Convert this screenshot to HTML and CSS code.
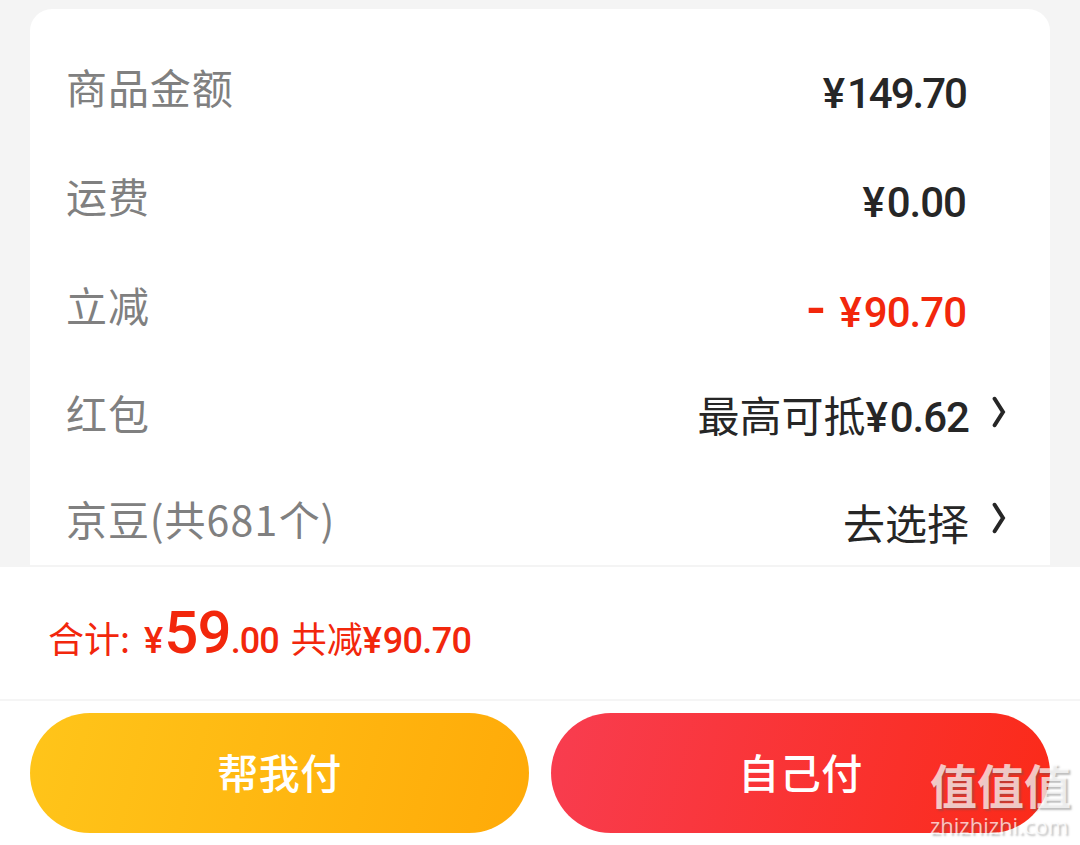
FILE: index.html
```
<!DOCTYPE html>
<html lang="zh-CN">
<head>
    <meta charset="UTF-8">
    <meta name="viewport" content="width=device-width, initial-scale=1.0">
    <title>确认订单</title>
    <link rel="stylesheet" href="styles.css">
</head>
<body>

    <div class="page">
        <!-- Price details -->
        <div class="details">
            <div class="card">
                <div class="row">
                    <span class="label">商品金额</span>
                    <span class="value price tight"><span class="yen">¥</span>149.70</span>
                </div>
                <div class="row">
                    <span class="label">运费</span>
                    <span class="value price"><span class="yen">¥</span>0.00</span>
                </div>
                <div class="row">
                    <span class="label">立减</span>
                    <span class="value price discount"><span class="minus">-</span><span class="yen">¥</span>90.70</span>
                </div>
                <div class="row link">
                    <span class="label">红包</span>
                    <span class="value">最高可抵<span class="price"><span class="yen">¥</span>0.62</span></span>
                    <svg class="arrow" viewBox="0 0 14 32"><path d="M2.6 2.8 L11 16 L2.6 29.2"/></svg>
                </div>
                <div class="row link">
                    <span class="label">京豆(共<span class="count">681</span>个)</span>
                    <span class="value">去选择</span>
                    <svg class="arrow" viewBox="0 0 14 32"><path d="M2.6 2.8 L11 16 L2.6 29.2"/></svg>
                </div>
            </div>
        </div>

        <!-- Total -->
        <div class="total">
            <span class="total-label">合计:</span>
            <span class="total-price"><span class="yen">¥</span><span class="big">59</span>.00</span>
            <span class="saved">共减<span class="saved-price"><span class="yen">¥</span>90.70</span></span>
        </div>

        <!-- Buttons -->
        <div class="buttons">
            <button class="btn yellow">帮我付</button>
            <button class="btn red">自己付</button>
        </div>

        <div class="watermark">
            <div class="mark-name">值值值</div>
            <div class="mark-url">zhizhizhi.com</div>
        </div>
    </div>

</body>
</html>
```
FILE: styles.css
```
body {
    margin: 0;
    font-family: "Noto Sans CJK SC", sans-serif;
    background-color: #fff;
    color: #262626;
}
.page {
    position: relative;
    width: 1080px;
    height: 845px;
    overflow: hidden;
}
.details {
    box-sizing: border-box;
    height: 567px;
    padding: 9px 30px 0;
    background-color: #f4f4f4;
}
.card {
    box-sizing: border-box;
    height: 556px;
    padding: 27px 44px 0 36px;
    border-radius: 22px 22px 0 0;
    background-color: #fff;
    overflow: hidden;
}
.row {
    display: flex;
    align-items: center;
    height: 109px;
    padding-right: 38px;
    font-size: 42px;
    line-height: 60px;
    white-space: nowrap;
}
.row.link {
    height: 106px;
    padding-right: 0;
}
.label {
    flex: 1;
    padding-bottom: 9px;
    color: #808080;
    font-size: 41px;
    letter-spacing: 0.9px;
}
.count {
    letter-spacing: 1.3px;
}
.value {
    padding-top: 6px;
}
.link .value {
    padding-top: 0;
    padding-bottom: 1px;
}
.price {
    font-family: Roboto, sans-serif;
    font-weight: 500;
    letter-spacing: -1px;
}
.tight {
    letter-spacing: -2px;
}
.price .yen {
    letter-spacing: 2px;
}
.row > .price {
    margin-right: 2px;
}
.discount {
    color: #f2270c;
}
.minus {
    margin-right: 15px;
    font-size: 56px;
    line-height: 1;
}
.arrow {
    width: 14px;
    height: 32px;
    margin: 0 0 8px 23px;
    fill: none;
    stroke: #262626;
    stroke-width: 4;
    stroke-linecap: round;
}
.total {
    display: flex;
    align-items: baseline;
    box-sizing: border-box;
    height: 134px;
    padding: 26px 0 0 48px;
    border-bottom: 2px solid #f5f5f5;
    color: #f2270c;
    font-size: 36px;
    line-height: 80px;
    white-space: nowrap;
}
.total-price {
    margin-left: 14px;
    font-family: Roboto, sans-serif;
    font-weight: 500;
    letter-spacing: -1px;
}
.total .yen {
    letter-spacing: 1px;
}
.big {
    font-size: 60px;
    letter-spacing: -0.8px;
}
.saved {
    margin-left: 12px;
}
.saved-price {
    font-family: Roboto, sans-serif;
    font-weight: 500;
    letter-spacing: -0.7px;
}
.buttons {
    display: flex;
    gap: 22px;
    padding: 12px 30px;
}
.btn {
    flex: 1;
    height: 120px;
    padding: 0 0 5px;
    border: none;
    border-radius: 60px;
    color: #fff;
    font-family: "Noto Sans CJK SC", sans-serif;
    font-size: 41px;
    font-weight: 500;
    letter-spacing: 0.5px;
}
.yellow {
    background: linear-gradient(105deg, #ffc51a, #ffaa08);
}
.red {
    background: linear-gradient(105deg, #f83d50, #fb2a18);
}
.watermark {
    position: absolute;
    right: 9px;
    bottom: 6px;
    color: rgba(255, 255, 255, 0.72);
    text-shadow: 2px 2px 2px rgba(90, 90, 90, 0.4);
    white-space: nowrap;
}
.mark-name {
    font-size: 47px;
    font-weight: 700;
    line-height: 54px;
}
.mark-url {
    font-family: "Open Sans", sans-serif;
    font-size: 22px;
    font-weight: 500;
    line-height: 28px;
}
```
